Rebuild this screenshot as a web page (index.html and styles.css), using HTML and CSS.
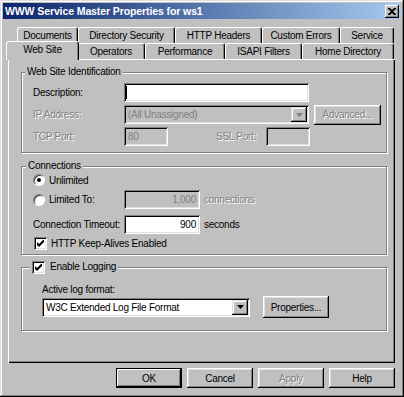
FILE: index.html
```html
<!DOCTYPE html>
<html lang="en">
<head>
  <meta charset="UTF-8">
  <title>WWW Service Master Properties for ws1</title>
  <link rel="stylesheet" href="styles.css">
</head>
<body>

  <div class="window">

    <!-- Barra de título -->
    <div class="titlebar">
      <span class="title">WWW Service Master Properties for ws1</span>
      <span class="close">
        <svg width="8" height="7" viewBox="0 0 8 7"><path d="M0 0h2l2 2 2-2h2v1L5 3.5 8 6v1H6L4 5 2 7H0V6l3-2.5L0 1z" fill="#000"/></svg>
      </span>
    </div>

    <div class="dialog">

      <!-- Pestañas -->
      <div class="tabrow back">
        <div class="tab">Documents</div>
        <div class="tab">Directory Security</div>
        <div class="tab">HTTP Headers</div>
        <div class="tab">Custom Errors</div>
        <div class="tab">Service</div>
      </div>
      <div class="tabrow front">
        <div class="tab active">Web Site</div>
        <div class="tab">Operators</div>
        <div class="tab">Performance</div>
        <div class="tab">ISAPI Filters</div>
        <div class="tab">Home Directory</div>
      </div>

      <div class="panel">

        <fieldset class="group ident">
          <legend>Web Site Identification</legend>
          <div class="row">
            <span class="lbl">Description:</span>
            <div class="edit wide"><span class="caret"></span></div>
          </div>
          <div class="row">
            <span class="lbl off">IP Address:</span>
            <div class="edit wide combo disabled">
              <span>(All Unassigned)</span>
              <span class="drop"><svg width="7" height="4" viewBox="0 0 7 4"><path d="M0 0h7L3.5 4z" fill="#808080"/></svg></span>
            </div>
            <button class="btn adv off">Advanced...</button>
          </div>
          <div class="row">
            <span class="lbl off">TCP Port:</span>
            <div class="edit port disabled">80</div>
            <span class="lbl-ssl off">SSL Port:</span>
            <div class="edit port disabled"></div>
          </div>
        </fieldset>

        <fieldset class="group conn">
          <legend>Connections</legend>
          <div class="row short">
            <span class="radio checked"></span>
            <span>Unlimited</span>
          </div>
          <div class="row limited">
            <span class="lbl radio-lbl"><span class="radio"></span><span>Limited To:</span></span>
            <div class="edit count disabled num">1,000</div>
            <span class="unit off">connections</span>
          </div>
          <div class="row timeout">
            <span class="lbl">Connection Timeout:</span>
            <div class="edit count num">900</div>
            <span class="unit">seconds</span>
          </div>
          <div class="row short keepalive">
            <span class="check"><svg width="7" height="7" viewBox="0 0 7 7"><path d="M0 2l2 2 5-5v3L2 7 0 5z" fill="#000"/></svg></span>
            <span>HTTP Keep-Alives Enabled</span>
          </div>
        </fieldset>

        <fieldset class="group logging">
          <legend>
            <span class="check"><svg width="7" height="7" viewBox="0 0 7 7"><path d="M0 2l2 2 5-5v3L2 7 0 5z" fill="#000"/></svg></span>
            <span>Enable Logging</span>
          </legend>
          <div class="fmt-label">Active log format:</div>
          <div class="row tall">
            <div class="edit combo logfmt">
              <span>W3C Extended Log File Format</span>
              <span class="drop"><svg width="7" height="4" viewBox="0 0 7 4"><path d="M0 0h7L3.5 4z" fill="#000"/></svg></span>
            </div>
            <button class="btn props">Properties...</button>
          </div>
        </fieldset>

      </div>

      <!-- Botones del diálogo -->
      <div class="buttons">
        <button class="btn default">OK</button>
        <button class="btn">Cancel</button>
        <button class="btn off">Apply</button>
        <button class="btn">Help</button>
      </div>

    </div>
  </div>

</body>
</html>
```

FILE: styles.css
```css
* {
  box-sizing: border-box;
}
body {
  margin: 0;
  background: #c0c0c0;
  font-family: "Liberation Sans", Arial, sans-serif;
  font-size: 10px;
  letter-spacing: -0.25px;
  line-height: 13px;
  color: #000;
  white-space: nowrap;
}

/* Ventana */
.window {
  width: 404px;
  height: 397px;
  padding: 3px;
  background: #c0c0c0;
  box-shadow: inset -1px -1px #000, inset 1px 1px #dfdfdf, inset -2px -2px #808080, inset 2px 2px #fff;
}
.titlebar {
  height: 16px;
  display: flex;
  align-items: center;
  justify-content: space-between;
  padding: 0 2px;
  background: linear-gradient(to right, #0a246a, #a6caf0);
}
.title {
  font-weight: bold;
  font-size: 10.5px;
  letter-spacing: -0.1px;
  color: #fff;
}
.close {
  width: 14px;
  height: 13px;
  display: flex;
  align-items: center;
  justify-content: center;
  background: #c0c0c0;
  box-shadow: inset -1px -1px #000, inset 1px 1px #fff, inset -2px -2px #808080;
}

.dialog {
  padding: 8px 6px 0 5px;
}

/* Pestañas */
.tabrow {
  display: flex;
  height: 16px;
}
.tabrow.back {
  margin-left: 9px;
}
.tab {
  flex: none;
  padding: 1px 0 0;
  text-align: center;
  line-height: 14px;
  border-radius: 3px 3px 0 0;
  border-top: 1px solid #fff;
  border-left: 1px solid #fff;
  border-right: 1px solid #000;
  box-shadow: inset -1px 0 #808080;
  background: #c0c0c0;
}
.back .tab:nth-child(1) { width: 61px; }
.back .tab:nth-child(2) { width: 97px; }
.back .tab:nth-child(3) { width: 87px; }
.back .tab:nth-child(4) { width: 78px; }
.back .tab:nth-child(5) { width: 54px; }
.front .tab:nth-child(1) { width: 73px; }
.front .tab:nth-child(2) { width: 68px; }
.front .tab:nth-child(3) { width: 80px; }
.front .tab:nth-child(4) { width: 77px; }
.front .tab:nth-child(5) { width: 92px; }
.tab.active {
  position: relative;
  z-index: 1;
  margin: -2px -2px -1px -2px;
  height: 19px;
}

.panel {
  height: 304px;
  padding: 7px 8px 0 13px;
  box-shadow: inset 1px 1px #fff, inset -1px -1px #000, inset -2px -2px #808080;
}

/* Marcos de grupo */
.group {
  margin: 0;
  padding: 0;
  min-width: 0;
  border: 1px solid #808080;
  box-shadow: 1px 1px 0 #fff, inset 1px 1px 0 #fff;
}
.group legend {
  padding: 0 2px;
  line-height: 12px;
  background: #c0c0c0;
}
.ident {
  padding: 5px 0 6px 11px;
}
.ident legend {
  margin-left: -8px;
}
.conn {
  margin-top: 7px;
  padding: 0 0 3px 11px;
}
.conn legend {
  margin-left: -7px;
}
.logging {
  margin-top: 5px;
  padding: 9px 0 12px 20px;
}
.logging legend {
  margin-left: -12px;
  display: flex;
  align-items: center;
  gap: 5px;
  line-height: 14px;
}

.row {
  display: flex;
  align-items: center;
  height: 19px;
}
.ident .row + .row {
  margin-top: 3px;
}
.row.short {
  height: 16px;
  gap: 4px;
}
.row.tall {
  height: 22px;
}
.limited {
  margin-top: 2px;
}
.timeout {
  margin-top: 6px;
}
.keepalive {
  margin-top: 1px;
}
.lbl {
  width: 91px;
  flex: none;
}
.radio-lbl {
  display: flex;
  align-items: center;
  gap: 4px;
}
.lbl-ssl {
  margin-left: 48px;
  width: 50px;
}
.unit {
  margin-left: 4px;
}
.off {
  color: #808080;
  text-shadow: 1px 1px 0 #fff;
}
.fmt-label {
  height: 13px;
}

/* Controles */
.edit {
  height: 19px;
  display: flex;
  align-items: center;
  padding: 0 4px;
  background: #fff;
  box-shadow: inset 1px 1px #808080, inset -1px -1px #fff, inset 2px 2px #000, inset -2px -2px #dfdfdf;
}
.edit.disabled {
  background: #c0c0c0;
  color: #808080;
}
.edit.num {
  justify-content: flex-end;
}
.wide {
  width: 185px;
}
.port {
  width: 44px;
}
.count {
  width: 76px;
}
.logfmt {
  width: 208px;
}
.caret {
  width: 1px;
  height: 13px;
  background: #000;
  margin-left: -2px;
}
.combo {
  justify-content: space-between;
  padding-right: 2px;
}
.drop {
  width: 16px;
  height: 15px;
  display: flex;
  align-items: center;
  justify-content: center;
  background: #c0c0c0;
  box-shadow: inset -1px -1px #000, inset 1px 1px #dfdfdf, inset -2px -2px #808080, inset 2px 2px #fff;
}

.radio {
  width: 12px;
  height: 12px;
  flex: none;
  border-radius: 50%;
  background: #fff;
  border: 1px solid;
  border-color: #808080 #fff #fff #808080;
  box-shadow: inset 1px 1px #404040;
  display: flex;
  align-items: center;
  justify-content: center;
}
.radio.checked::after {
  content: "";
  width: 4px;
  height: 4px;
  border-radius: 50%;
  background: #000;
}
.check {
  width: 13px;
  height: 13px;
  flex: none;
  display: flex;
  align-items: center;
  justify-content: center;
  background: #fff;
  box-shadow: inset 1px 1px #808080, inset -1px -1px #fff, inset 2px 2px #000, inset -2px -2px #dfdfdf;
}
.keepalive .check {
  margin-left: 1px;
}

/* Botones */
.btn {
  width: 66px;
  height: 20px;
  padding: 0;
  border: none;
  font: inherit;
  letter-spacing: inherit;
  color: #000;
  background: #c0c0c0;
  box-shadow: inset -1px -1px #000, inset 1px 1px #fff, inset -2px -2px #808080, inset 2px 2px #dfdfdf;
}
.btn.off {
  color: #808080;
}
.btn.default {
  box-shadow: inset 0 0 0 1px #000, inset -2px -2px #000, inset 2px 2px #fff, inset -3px -3px #808080;
}
.adv {
  width: 67px;
  margin-left: 5px;
}
.props {
  height: 22px;
  margin-left: 13px;
}
.buttons {
  display: flex;
  justify-content: flex-end;
  gap: 5px;
  margin-top: 5px;
}
```
